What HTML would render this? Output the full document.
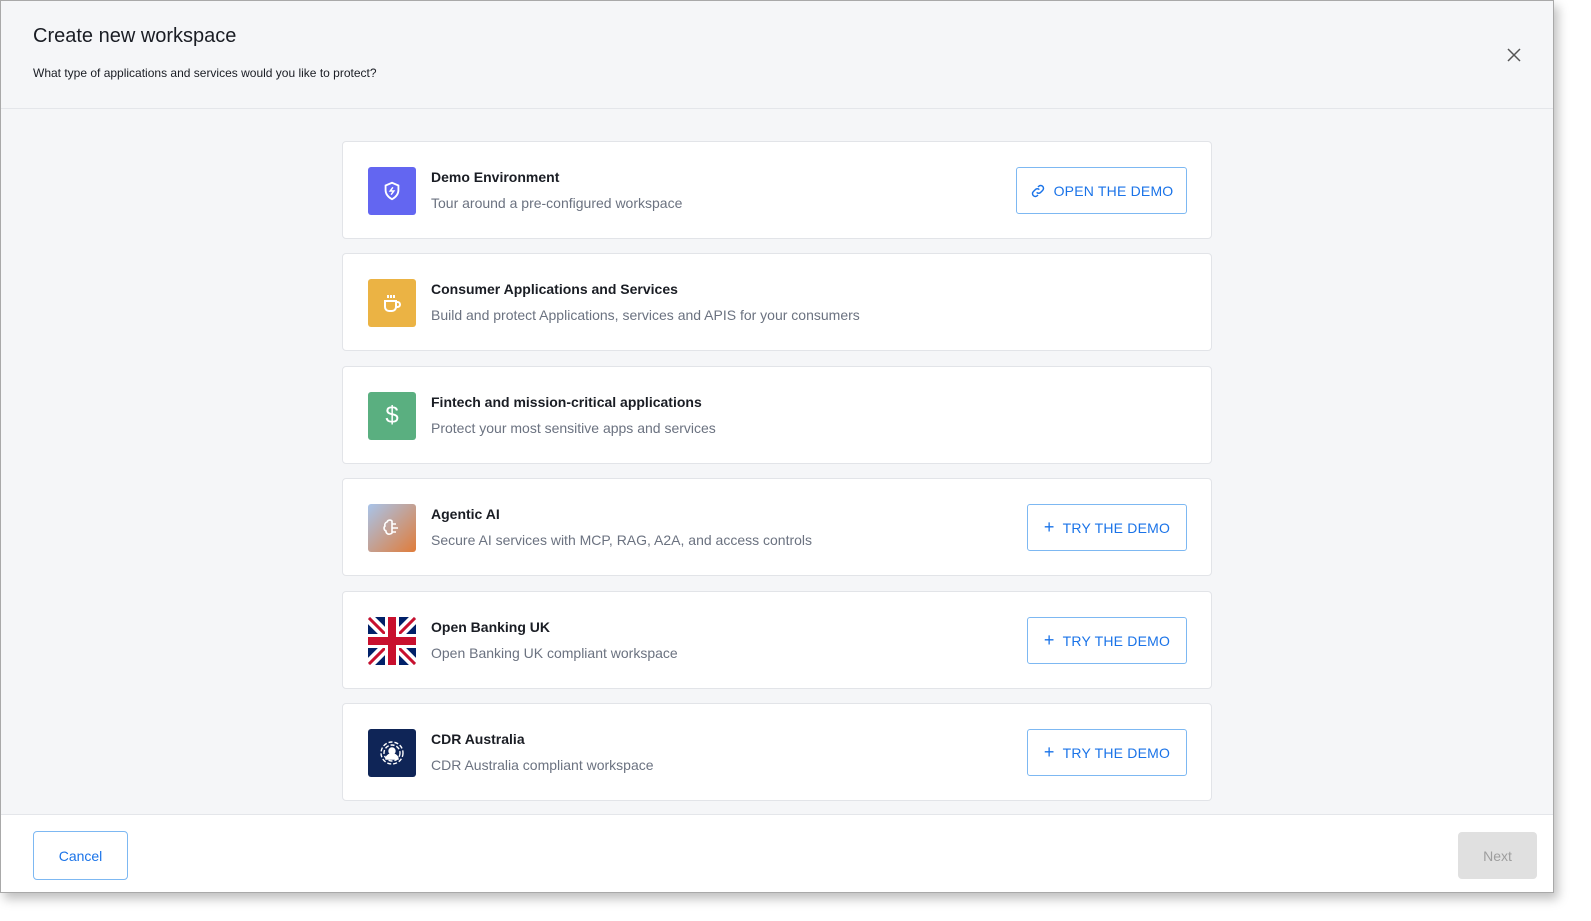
<!DOCTYPE html>
<html><head><style>
*{box-sizing:border-box;margin:0;padding:0}
html{width:1591px;height:921px;overflow:hidden}
body{width:1591px;height:921px;background:#fff;font-family:"Liberation Sans",sans-serif;position:relative;overflow:hidden}
.dlg{position:absolute;left:0;top:0;width:1554px;height:893px;border:1px solid #a9a9a9;background:#f5f6f8;box-shadow:4px 6px 10px rgba(0,0,0,.25);overflow:hidden}
.hdr{position:absolute;left:0;top:0;right:0;height:108px;border-bottom:1px solid #e4e6ea}
h1{position:absolute;left:32px;top:24px;font-size:20px;font-weight:normal;color:#1a1d24}
.sub{position:absolute;left:32px;top:65px;font-size:12px;color:#1a1d24}
.x{position:absolute;left:1505px;top:46px}
.card{position:absolute;left:341px;width:870px;height:98px;background:#fff;border:1px solid #e2e4e8;border-radius:4px}
.ic{position:absolute;left:25px;top:25px;width:48px;height:48px;border-radius:3px;display:flex;align-items:center;justify-content:center;overflow:hidden}
.t{position:absolute;left:88px;top:27px;font-size:14px;font-weight:bold;color:#1a1d24}
.d{position:absolute;left:88px;top:53px;font-size:14px;color:#6b7280}
.btn{position:absolute;right:24px;top:25px;height:47px;border:1px solid #7db8f2;border-radius:3px;color:#1a73e8;font-size:14px;display:flex;align-items:center;justify-content:center;gap:8px;background:#fff;letter-spacing:.2px}
.ftr{position:absolute;left:0;right:0;top:813px;bottom:0;background:#fff;border-top:1px solid #e4e6ea}
.cancel{position:absolute;left:32px;top:16px;width:95px;height:49px;border:1px solid #7db8f2;border-radius:4px;color:#1a73e8;font-size:14px;display:flex;align-items:center;justify-content:center}
.next{position:absolute;left:1457px;top:17px;width:79px;height:47px;background:#e0e0e0;border-radius:4px;color:#9e9e9e;font-size:14px;display:flex;align-items:center;justify-content:center}
</style></head><body>
<div class="dlg">
<div class="hdr">
<h1>Create new workspace</h1>
<div class="sub">What type of applications and services would you like to protect?</div>
<svg class="x" width="16" height="16" viewBox="0 0 16 16"><path d="M2 2L14 14M14 2L2 14" stroke="#555" stroke-width="1.5"/></svg>
</div>

<div class="card" style="top:140px">
<div class="ic" style="background:#6366f1"><svg width="22" height="22" viewBox="0 0 24 24" fill="none" stroke="#fff" stroke-width="2"><path d="M12 3l7 3v5c0 5-3.5 8-7 10-3.5-2-7-5-7-10V6z"/><path d="M13 8l-3 4h4l-3 4" stroke-width="1.6"/></svg></div>
<div class="t">Demo Environment</div><div class="d">Tour around a pre-configured workspace</div>
<div class="btn" style="width:171px"><svg width="16" height="16" viewBox="0 0 24 24" fill="none" stroke="#1a73e8" stroke-width="2.2"><path d="M10 14a4 4 0 006 0l3-3a4 4 0 00-6-6l-1 1"/><path d="M14 10a4 4 0 00-6 0l-3 3a4 4 0 006 6l1-1"/></svg>OPEN THE DEMO</div>
</div>

<div class="card" style="top:252px">
<div class="ic" style="background:#ebb344"><svg width="24" height="24" viewBox="0 0 24 24" fill="none" stroke="#fff" stroke-width="2"><path d="M5 10h11v6a4 4 0 01-4 4H9a4 4 0 01-4-4z"/><path d="M16 11h1.5a2.5 2.5 0 010 5H16"/><path d="M8 4v3M11 4v3M14 4v3"/></svg></div>
<div class="t">Consumer Applications and Services</div><div class="d">Build and protect Applications, services and APIS for your consumers</div>
</div>

<div class="card" style="top:365px">
<div class="ic" style="background:#5aaf80"><span style="color:#fff;font-size:24px">$</span></div>
<div class="t">Fintech and mission-critical applications</div><div class="d">Protect your most sensitive apps and services</div>
</div>

<div class="card" style="top:477px">
<div class="ic" style="background:linear-gradient(135deg,#a8c4ea,#e07c3a)"><svg width="24" height="24" viewBox="0 0 24 24" fill="none" stroke="#fff" stroke-width="1.6"><path d="M12 5a3 3 0 00-5 1 3 3 0 00-2 4 3 3 0 001 5 3 3 0 004 3 3 3 0 002-1V5z"/><path d="M12 8h4M12 12h6M12 16h4"/></svg></div>
<div class="t">Agentic AI</div><div class="d">Secure AI services with MCP, RAG, A2A, and access controls</div>
<div class="btn" style="width:160px"><span style="font-size:18px;font-weight:300">+</span>TRY THE DEMO</div>
</div>

<div class="card" style="top:590px">
<div class="ic"><svg width="48" height="48" viewBox="0 0 48 48"><rect width="48" height="48" fill="#012169"/><path d="M0 0L48 48M48 0L0 48" stroke="#fff" stroke-width="10"/><path d="M0 0L48 48M48 0L0 48" stroke="#c8102e" stroke-width="3"/><path d="M24 0V48M0 24H48" stroke="#fff" stroke-width="14"/><path d="M24 0V48M0 24H48" stroke="#c8102e" stroke-width="8"/></svg></div>
<div class="t">Open Banking UK</div><div class="d">Open Banking UK compliant workspace</div>
<div class="btn" style="width:160px"><span style="font-size:18px;font-weight:300">+</span>TRY THE DEMO</div>
</div>

<div class="card" style="top:702px">
<div class="ic" style="background:#0f2557"><svg width="26" height="26" viewBox="0 0 26 26" fill="none" stroke="#fff" stroke-width="1.4"><circle cx="13" cy="13" r="11" stroke-dasharray="4 2"/><circle cx="13" cy="13" r="8" stroke-dasharray="4 2"/><circle cx="13" cy="11" r="3" fill="#fff"/><path d="M7 19a6 5 0 0112 0z" fill="#fff"/></svg></div>
<div class="t">CDR Australia</div><div class="d">CDR Australia compliant workspace</div>
<div class="btn" style="width:160px"><span style="font-size:18px;font-weight:300">+</span>TRY THE DEMO</div>
</div>

<div class="ftr">
<div class="cancel">Cancel</div>
<div class="next">Next</div>
</div>
</div>
</body></html>
